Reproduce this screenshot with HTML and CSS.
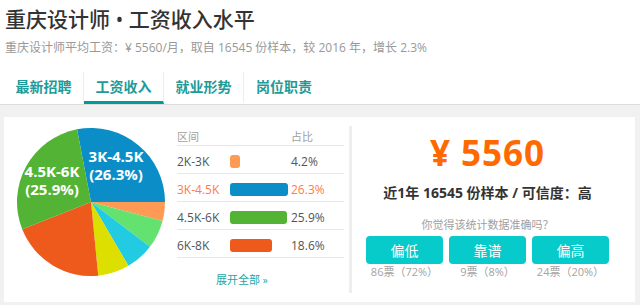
FILE: index.html
```html
<!DOCTYPE html>
<html lang="zh-CN">
<head>
<meta charset="utf-8">
<title>重庆设计师 • 工资收入水平</title>
<link rel="stylesheet" href="styles.css">
</head>
<body>
<header class="header">
  <h1 class="title">重庆设计师 • 工资收入水平</h1>
  <p class="subtitle">重庆设计师平均工资：¥ 5560/月，取自 16545 份样本，较 2016 年，增长 2.3%</p>
</header>
<nav class="tabs">
  <a class="tab">最新招聘</a>
  <a class="tab active">工资收入</a>
  <a class="tab">就业形势</a>
  <a class="tab last">岗位职责</a>
</nav>
<main class="content">
  <section class="card">
    <div class="dist">
      <svg class="pie" width="150" height="150" viewBox="0 0 150 150">
        <path fill="#0b8ec8" d="M75 75 L61.0 2.33 A74 74 0 0 1 149 75 Z"/>
        <path fill="#ff9a55" d="M75 75 L149 75 A74 74 0 0 1 146.54 93.9 Z"/>
        <path fill="#63e26f" d="M75 75 L146.54 93.9 A74 74 0 0 1 133.94 119.74 Z"/>
        <path fill="#22cae2" d="M75 75 L133.94 119.74 A74 74 0 0 1 112.45 138.83 Z"/>
        <path fill="#dcdf00" d="M75 75 L112.45 138.83 A74 74 0 0 1 82.22 148.65 Z"/>
        <path fill="#ee5a1b" d="M75 75 L82.22 148.65 A74 74 0 0 1 6.25 102.36 Z"/>
        <path fill="#53b335" d="M75 75 L6.25 102.36 A74 74 0 0 1 61.0 2.33 Z"/>
        <text class="pie-label" x="100" y="35">3K-4.5K</text>
        <text class="pie-label" x="100" y="53">(26.3%)</text>
        <text class="pie-label" x="36" y="50">4.5K-6K</text>
        <text class="pie-label" x="36" y="68">(25.9%)</text>
      </svg>
      <div class="table">
        <div class="row head"><span>区间</span><span></span><span>占比</span></div>
        <div class="row"><span>2K-3K</span><span class="bar-cell"><i class="bar orange" style="width:10px"></i></span><span>4.2%</span></div>
        <div class="row hl"><span>3K-4.5K</span><span class="bar-cell"><i class="bar blue" style="width:58px"></i></span><span>26.3%</span></div>
        <div class="row"><span>4.5K-6K</span><span class="bar-cell"><i class="bar green" style="width:57px"></i></span><span>25.9%</span></div>
        <div class="row"><span>6K-8K</span><span class="bar-cell"><i class="bar red" style="width:42px"></i></span><span>18.6%</span></div>
        <a class="more">展开全部 <span class="raquo">»</span></a>
      </div>
    </div>
    <div class="summary">
      <div class="price">¥ 5560</div>
      <div class="sample">近1年 16545 份样本 / 可信度：高</div>
      <div class="question">你觉得该统计数据准确吗？</div>
      <div class="votes">
        <div class="vote"><button class="vote-btn">偏低</button><span class="vote-count">86票（72%）</span></div>
        <div class="vote"><button class="vote-btn">靠谱</button><span class="vote-count">9票（8%）</span></div>
        <div class="vote"><button class="vote-btn">偏高</button><span class="vote-count">24票（20%）</span></div>
      </div>
    </div>
  </section>
</main>
</body>
</html>
```
FILE: styles.css
```css
* { box-sizing: border-box; }
html, body { margin: 0; padding: 0; }
body {
  width: 640px;
  height: 305px;
  overflow: hidden;
  background: #f1f1f1;
  font-family: "Open Sans", "Noto Sans CJK SC", sans-serif;
  color: #333;
}
.header {
  background: #fff;
  padding: 5px 0 0 5px;
}
.title {
  margin: 0;
  font-size: 21px;
  line-height: 28px;
  font-weight: 500;
  color: #333;
}
.subtitle {
  margin: 5px 0 0;
  font-size: 12px;
  line-height: 20px;
  color: #999;
}
.tabs {
  display: flex;
  background: #fff;
  padding: 14px 0 0 4px;
  border-bottom: 1px solid #dcdcdc;
}
.tab {
  width: 80px;
  height: 32px;
  line-height: 29px;
  text-align: center;
  font-size: 14px;
  font-weight: 700;
  color: #1e9b98;
  border-right: 1px solid #ececec;
  border-bottom: 3px solid transparent;
}
.tab.last { border-right: none; }
.tab.active { border-bottom-color: #009a98; }
.content {
  padding: 12px 5px 0 4px;
}
.card {
  display: flex;
  height: 185px;
  background: #fff;
  padding: 9px 0;
}
.dist {
  display: flex;
  width: 348px;
  padding-left: 12px;
  border-right: 3px solid #eee;
}
.pie {
  display: block;
  margin-top: 1px;
  flex: none;
}
.pie-label {
  fill: #fff;
  font-family: "Open Sans", sans-serif;
  font-weight: 700;
  font-size: 15px;
  text-anchor: middle;
}
.table {
  margin-left: 11px;
  width: 167px;
  display: flex;
  flex-direction: column;
}
.row {
  display: grid;
  grid-template-columns: 53px 61px 1fr;
  align-items: center;
  height: 28px;
  padding-top: 3px;
  border-bottom: 1px solid #e8e8e8;
  font-size: 12px;
  color: #555;
}
.row.head {
  height: 20px;
  padding-top: 0;
  font-size: 11px;
  color: #a0a0a0;
}
.row.hl { color: #ff7c44; }
.bar-cell { display: flex; }
.bar {
  display: block;
  height: 13px;
  border-radius: 3px;
}
.bar.orange { background: #ff9a55; }
.bar.blue { background: #0b8ec8; }
.bar.green { background: #53b335; }
.bar.red { background: #ee5a1b; }
.more {
  margin: 13px 0 0 39px;
  font-size: 11px;
  line-height: 18px;
  color: #1ca5a5;
}
.raquo { font-size: 10px; }
.summary {
  padding-left: 14px;
  width: 257px;
  display: flex;
  flex-direction: column;
  align-items: center;
}
.price {
  margin-top: 5px;
  font-family: "Open Sans", sans-serif;
  font-size: 35px;
  line-height: 44px;
  font-weight: 700;
  letter-spacing: 1px;
  color: #ff6a00;
}
.sample {
  margin-top: 8px;
  font-size: 14px;
  line-height: 20px;
  font-weight: 700;
  color: #333;
}
.question {
  margin-top: 14px;
  font-size: 11px;
  line-height: 16px;
  color: #a0a0a0;
}
.votes {
  margin-top: 3px;
  display: flex;
  gap: 6px;
}
.vote {
  display: flex;
  flex-direction: column;
  align-items: center;
}
.vote-btn {
  width: 77px;
  height: 28px;
  border: none;
  border-radius: 4px;
  background: #07caca;
  color: #fff;
  font-family: "Open Sans", "Noto Sans CJK SC", sans-serif;
  font-size: 14px;
  padding: 0;
}
.vote-count {
  font-size: 11px;
  line-height: 16px;
  color: #a3a3a3;
}
```
